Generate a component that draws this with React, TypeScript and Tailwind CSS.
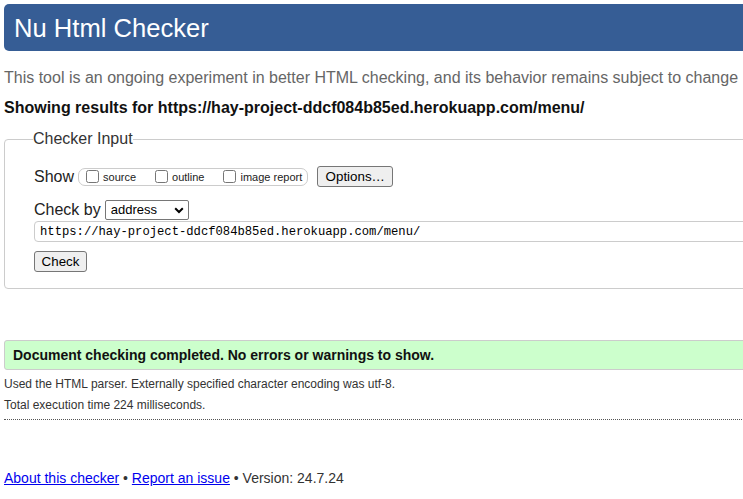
import React from "react"

const sans = { fontFamily: '"Liberation Sans", Arial, sans-serif' }

function Check({ label }: { label: string }) {
  return (
    <label className="flex items-center">
      <input type="checkbox" className="m-0 h-[13px] w-[13px]" />
      <span className="ml-[4px] mt-[2px] text-[11px] leading-[13px] text-[#222]">{label}</span>
    </label>
  )
}

export default function App() {
  const url = "https://hay-project-ddcf084b85ed.herokuapp.com/menu/"

  return (
    <div className="w-[743px] h-[499px] overflow-hidden bg-white" style={sans}>
      <div className="w-[1000px] pl-[4px]">
        {/* Header */}
        <div className="mt-[4px] h-[47px] flex items-center pl-[10px] bg-[#365d95] rounded-l-[5px]">
          <h1 className="text-[25.6px] leading-[30px] text-white font-normal pt-[1px]">Nu Html Checker</h1>
        </div>

        <p className="mt-[18px] text-[16px] leading-[18px] text-[#666]">
          This tool is an ongoing experiment in better HTML checking, and its behavior remains subject to change
        </p>
        <p className="mt-[12px] text-[16px] leading-[18px] font-bold text-[#111]">
          Showing results for {url}
        </p>

        {/* Checker input */}
        <fieldset className="mt-[13px] border border-[#ccc] rounded-[4px] pl-[29px] pt-[18px] pb-[16px]">
          <legend className="-ml-[1px] px-0 text-[16px] leading-[18px] text-[#333]">Checker Input</legend>

          <div className="flex items-center h-[21px]">
            <span className="text-[16px] leading-[18px] text-[#222]">Show</span>
            <div className="ml-[4px] flex items-center gap-[19px] h-[18px] border border-[#ccc] rounded-[7px] pl-[7px] pr-[5px]">
              <Check label="source" />
              <Check label="outline" />
              <Check label="image report" />
            </div>
            <button className="ml-[9px] h-[21px] w-[76px] border border-[#767676] rounded-[3px] bg-[#efefef] text-[13.33px] text-black">
              Options…
            </button>
          </div>

          <div className="mt-[13px] flex items-center h-[20px]">
            <span className="text-[16px] leading-[18px] text-[#222]">Check by</span>
            <div className="ml-[4px] h-[20px] w-[84px] border border-[#767676] rounded-[2px] flex items-center justify-between pl-[5px] pr-[4px]">
              <span className="text-[13px] text-black">address</span>
              <svg width="10" height="7" viewBox="0 0 10 7">
                <path d="M1.2 1.3 L5 5 L8.8 1.3" fill="none" stroke="#000" strokeWidth="2" />
              </svg>
            </div>
          </div>

          <input
            readOnly
            value={url}
            className="mt-[1px] block h-[21px] w-[950px] border border-[#ccc] rounded-[4px] pl-[5px] text-[12.2px] text-black"
            style={{ fontFamily: '"Liberation Mono", "DejaVu Sans Mono", monospace' }}
          />

          <button className="mt-[9px] block h-[21px] w-[53px] border border-[#767676] rounded-[3px] bg-[#efefef] text-[13.33px] text-black">
            Check
          </button>
        </fieldset>

        {/* Result */}
        <div className="mt-[51px] h-[30px] flex items-center pl-[8px] bg-[#ccffcc] border border-[#ccc] rounded-l-[3px]">
          <span className="text-[14px] font-bold text-[#111]">
            Document checking completed. No errors or warnings to show.
          </span>
        </div>

        <p className="mt-[7px] text-[12px] leading-[14px] text-[#333]">
          Used the HTML parser. Externally specified character encoding was utf-8.
        </p>
        <p className="mt-[7px] text-[12px] leading-[14px] text-[#333]">
          Total execution time 224 milliseconds.
        </p>

        <div className="mt-[7px] border-t border-dotted border-[#555]" />

        <p className="mt-[50px] text-[14px] leading-[16px] text-[#333]">
          <a href="#" className="text-[#0000ee] underline">About this checker</a>
          {" • "}
          <a href="#" className="text-[#0000ee] underline">Report an issue</a>
          {" • Version: 24.7.24"}
        </p>
      </div>
    </div>
  )
}
